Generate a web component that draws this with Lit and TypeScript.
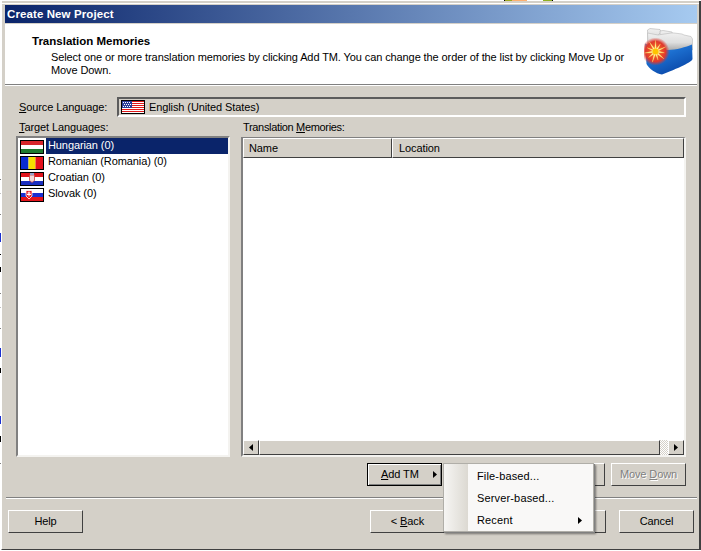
import { LitElement, html, css, svg } from "lit";
import { customElement } from "lit/decorators.js";

const usStripes = [0, 2, 4, 6, 8, 10].map((y) => svg`<rect x="0" y=${y} width="22" height="1" fill="#e01818"/>`);
const flags: Record<string, unknown> = {
  us: svg`<rect width="22" height="12" fill="#fff"/>${usStripes}<rect width="10" height="7" fill="#2a3f9a"/><path d="M1 1.500h1M3 1.500h1M5 1.500h1M7 1.500h1M2 3.500h1M4 3.500h1M6 3.500h1M8 3.500h1M1 5.500h1M3 5.500h1M5 5.500h1M7 5.500h1" stroke="#fff" stroke-width="1"/>`,
  hu: svg`<rect width="22" height="4" fill="#d8262c"/><rect y="4" width="22" height="4" fill="#fff"/><rect y="8" width="22" height="4" fill="#1f7a30"/>`,
  ro: svg`<rect width="7.500" height="12" fill="#0a2ad0"/><rect x="7.500" width="7" height="12" fill="#f6e000"/><rect x="14.500" width="7.500" height="12" fill="#e4101c"/>`,
  hr: svg`<rect width="22" height="4" fill="#e0141c"/><rect y="4" width="22" height="4" fill="#fff"/><rect y="8" width="22" height="4" fill="#1a2fc0"/><path d="M8.500 2h5v5.500l-2.500 2-2.500-2z" fill="#f2d8d8" stroke="#c04040" stroke-width=".8"/><rect x="9" y="0" width="4" height="2" fill="#9aa0c8"/>`,
  sk: svg`<rect width="22" height="4" fill="#fff"/><rect y="4" width="22" height="4" fill="#1a2fd0"/><rect y="8" width="22" height="4" fill="#e4141c"/><path d="M5 1.500h6v5.500l-3 3-3-3z" fill="#e4141c" stroke="#fff" stroke-width=".8"/><path d="M8 2.500v5M6.500 4h3M6 5.500h4" stroke="#fff" stroke-width="1"/>`,
};

function flag(code: string) {
  return html`<svg class="flag" width="24" height="14" viewBox="-1 -1 24 14"><rect x="-.5" y="-.5" width="23" height="13" fill="none" stroke="#000"/>${flags[code]}</svg>`;
}

function arrow(dir: "l" | "r", size = 7) {
  const d = dir === "r" ? "M1 0l4 3.500-4 3.500z" : "M5 0L1 3.500 5 7z";
  return html`<svg width=${size - 1} height=${size} viewBox="0 0 6 7"><path d=${d} fill="#000"/></svg>`;
}

const starPts = Array.from({ length: 22 }, (_, i) => {
  const a = (i * Math.PI) / 11 - Math.PI / 2;
  const r = i % 2 === 0 ? (i % 4 === 0 ? 11 : 9) : 2.8;
  return `${(11.5 + r * Math.cos(a)).toFixed(1)},${(23.5 + r * Math.sin(a)).toFixed(1)}`;
}).join(" ");

const logo = html`<svg class="logo" width="52" height="48" viewBox="0 0 52 48">
  <defs>
    <linearGradient id="fold" x1="0" y1="0" x2=".6" y2="1"><stop offset="0" stop-color="#4f9ce6"/><stop offset=".45" stop-color="#1c6fd0"/><stop offset="1" stop-color="#0a48a8"/></linearGradient>
    <linearGradient id="pap" x1="0" y1="0" x2="0" y2="1"><stop offset="0" stop-color="#f0f0f0"/><stop offset=".5" stop-color="#dedede"/><stop offset="1" stop-color="#a0a0a0"/></linearGradient>
    <radialGradient id="halo"><stop offset="0" stop-color="#ff7a20"/><stop offset=".72" stop-color="#e0382c"/><stop offset="1" stop-color="#e0382c" stop-opacity="0"/></radialGradient>
  </defs>
  <path d="M3.500 2 L6 0.500 L16 1.500 L17 4 L4 18z" fill="url(#pap)" stroke="#b4b4b4" stroke-width=".6"/>
  <path d="M16 3 L19 2.500 L28 4 L29 7 L16 21z" fill="url(#pap)" stroke="#b4b4b4" stroke-width=".6"/>
  <path d="M27 5 L30 5 L38 6 L40 7 L47 8.500 L48.500 11 L48.500 22 L24 24 L4 17 L3.500 5 L14 7z" fill="url(#pap)" stroke="#b8b8b8" stroke-width=".6"/>
  <path d="M1 15.500 C8 18 16 22 24 22 C32 22 42 19 48 16.500 L48.500 31 C48 33.500 40 38 18 46.500 C12 45.500 5 41 2.500 36z" fill="url(#fold)"/>
  <circle cx="11.500" cy="23.500" r="14" fill="url(#halo)"/>
  <polygon points=${starPts} fill="#fff6a0" stroke="#ffe860" stroke-width=".3"/>
  <circle cx="11.500" cy="23.500" r="3" fill="#ffc400"/>
</svg>`;

@customElement("app-root")
export class AppRoot extends LitElement {
  static styles = css`
    :host { display: block; position: relative; width: 701px; height: 551px; background: #fff; overflow: hidden;
      font-family: "Liberation Sans", Arial, sans-serif; font-size: 11px; letter-spacing: -.1px; color: #000; white-space: nowrap; }
    u { text-decoration: underline; }
    .frag { position: absolute; display: block; }
    .window { box-sizing: border-box; position: absolute; left: 1px; top: 1px; width: 700px; height: 549px; background: #d4d0c8;
      border-left: 1px solid #fff; border-right: 2px solid #404040; border-bottom: 1px solid #404040; box-shadow: inset 0 2px 0 #d4d0c8, inset 0 3px 0 #fff;
      display: flex; flex-direction: column; padding: 4px 2px 0 3px; }
    .title { height: 18px; flex: none; background: linear-gradient(90deg, #0a246a, #a6caf0); color: #fff; font-weight: bold; font-size: 11.5px; line-height: 18px; padding-left: 2px; letter-spacing: .1px; margin-bottom: 1px; }
    .head { flex: none; height: 60px; background: #fff; border-bottom: 1px solid #808080; box-shadow: 0 1px 0 #fff; position: relative; }
    .head h1 { margin: 0; padding: 9px 0 0 27px; font-size: 11.5px; font-weight: bold; line-height: 16px; letter-spacing: 0; }
    .head p { margin: 0; padding: 2px 0 0 46px; line-height: 13px; width: 575px; white-space: normal; }
    .logo { position: absolute; right: 1px; top: 4px; }
    .main { flex: none; display: flex; flex-direction: column; padding: 12px 11px 0 11px; }
    .src { display: flex; align-items: center; height: 20px; }
    .src label { width: 101px; padding-left: 3px; box-sizing: border-box; flex: none; }
    .field { flex: 1; height: 20px; box-sizing: border-box; border: 2px solid; border-color: #5c5c5c #fff #fff #5c5c5c; display: flex; align-items: center; gap: 4px; padding-left: 2px; }
    .cols { display: grid; grid-template-columns: 214px 445px; column-gap: 11px; margin-top: 3px; }
    .lab { height: 16px; line-height: 15px; padding-left: 3px; }
    .cols > div:last-child .lab { padding-left: 2px; letter-spacing: -.33px; }
    .list { box-sizing: border-box; height: 321px; background: #fff; border: 2px solid; border-color: #808080 #f4f3f0 #f4f3f0 #808080; padding: 0 0 0 1px; }
    .item { display: flex; align-items: center; height: 16px; gap: 2px; }
    .item .flag { margin-left: 1px; margin-top: 2px; flex: none; }
    .item span { line-height: 14px; padding: 0 0 2px 2px; flex: 1; }
    .item.sel span { background: #0a246a; color: #fff; }
    .table { box-sizing: border-box; height: 320px; margin-top: 1px; background: #fff; border: solid; border-width: 1px 2px 2px 2px; border-color: #808080 #f4f3f0 #f4f3f0 #808080; display: flex; flex-direction: column; }
    .thead { display: flex; height: 20px; flex: none; }
    .th { box-sizing: border-box; background: #d4d0c8; border: 1px solid; border-color: #fff #404040 #404040 #fff; line-height: 18px; padding-left: 5px; }
    .th.a { width: 149px; }
    .th.b { flex: 1; padding-left: 6px; }
    .tbody { flex: 1; }
    .hscroll { flex: none; height: 15px; display: flex; background: #d4d0c8; }
    .sbtn { box-sizing: border-box; width: 16px; height: 15px; flex: none; display: flex; align-items: center; justify-content: center; background: #d4d0c8; border: 1px solid; border-color: #fff #404040 #404040 #fff; }
    .thumb { box-sizing: border-box; flex: 1; border: 1px solid; border-color: #fff #404040 #404040 #fff; }
    .track { width: 8px; flex: none; background: repeating-conic-gradient(#fff 0 25%, #d4d0c8 0 50%) 0 0 / 2px 2px; }
    .btnrow { display: flex; justify-content: flex-end; gap: 6px; margin-top: 6px; }
    .btn { box-sizing: border-box; width: 75px; height: 23px; display: flex; align-items: center; justify-content: center; padding-bottom: 1px; background: #d4d0c8; border: 1px solid; border-color: #fff #404040 #404040 #fff; }
    .btn.focus { border: 1px solid #000; box-shadow: inset 1px 1px 0 #fff, inset -1px -1px 0 #808080; justify-content: space-between; padding: 0 3px 1px 13px; margin-right: 1px; }
    .btn.dis { color: #808080; text-shadow: 1px 1px 0 #fff; }
    .sep { flex: none; height: 1px; background: #808080; box-shadow: 0 1px 0 #fff; margin: 11px 0 0 1px; }
    .foot { flex: none; display: flex; padding: 12px 0 0 3px; }
    .foot .gap { flex: 1; }
    .foot .btn.next { margin-right: 11px; }
    .foot .btn.finish { margin-right: 13px; }
    .foot .btn.cancel { margin-right: 3px; }
    .menu { position: absolute; left: 443px; top: 463px; width: 151px; height: 69px; background: #f9f8f7; box-shadow: 1px 1px 0 #808080, 2px 2px 2px rgba(0,0,0,.45); border: 1px solid #b0aea8; box-sizing: border-box; display: flex; flex-direction: column; padding-top: 1px; }
    .menu::before { content: ""; position: absolute; left: 0; top: 0; bottom: 0; width: 24px; background: linear-gradient(90deg, #f6f5f3, #dcd9d2); }
    .mi { height: 22px; line-height: 22px; flex: none; position: relative; padding-left: 33px; display: flex; align-items: center; letter-spacing: .15px; }
    .mi svg { position: absolute; right: 10px; top: 8px; }
  `;

  render() {
    const frags = [
      [0, 233, 1, 9, "#1a2fd0"], [0, 348, 1, 9, "#1a2fd0"], [0, 416, 1, 8, "#1a2fd0"],
      [0, 179, 1, 1, "#808080"], [0, 193, 1, 1, "#c0c0c0"], [0, 214, 1, 1, "#808080"], [0, 254, 1, 1, "#000"],
      [0, 267, 1, 5, "#000"], [0, 293, 1, 1, "#808080"], [0, 307, 1, 1, "#c0c0c0"], [0, 328, 1, 1, "#808080"],
      [0, 368, 1, 5, "#000"], [0, 436, 1, 6, "#000"], [0, 463, 1, 1, "#808080"],
      [504, 0, 1, 1, "#000"], [505, 0, 7, 1, "#a0a820"], [512, 0, 15, 1, "#ffb070"], [543, 0, 9, 1, "#90b020"], [552, 0, 1, 1, "#000"],
    ];
    return html`
      ${frags.map(([x, y, w, h, c]) => html`<i class="frag" style="left:${x}px;top:${y}px;width:${w}px;height:${h}px;background:${c}"></i>`)}
      <div class="window">
        <div class="title">Create New Project</div>
        <div class="head">
          <h1>Translation Memories</h1>
          <p>Select one or more translation memories by clicking Add TM. You can change the order of the list by clicking Move Up or Move Down.</p>
          ${logo}
        </div>
        <div class="main">
          <div class="src"><label><u>S</u>ource Language:</label><div class="field">${flag("us")}<span>English (United States)</span></div></div>
          <div class="cols">
            <div>
              <div class="lab"><u>T</u>arget Languages:</div>
              <div class="list">
                <div class="item sel">${flag("hu")}<span>Hungarian (0)</span></div>
                <div class="item">${flag("ro")}<span>Romanian (Romania) (0)</span></div>
                <div class="item">${flag("hr")}<span>Croatian (0)</span></div>
                <div class="item">${flag("sk")}<span>Slovak (0)</span></div>
              </div>
            </div>
            <div>
              <div class="lab">Translation <u>M</u>emories:</div>
              <div class="table">
                <div class="thead"><div class="th a">Name</div><div class="th b">Location</div></div>
                <div class="tbody"></div>
                <div class="hscroll">
                  <div class="sbtn">${arrow("l")}</div>
                  <div class="thumb"></div>
                  <div class="track"></div>
                  <div class="sbtn">${arrow("r")}</div>
                </div>
              </div>
            </div>
          </div>
          <div class="btnrow">
            <div class="btn focus"><span><u>A</u>dd TM</span>${arrow("r")}</div>
            <div class="btn"></div>
            <div class="btn"></div>
            <div class="btn dis"><span>Move <u>D</u>own</span></div>
          </div>
        </div>
        <div class="sep"></div>
        <div class="foot">
          <div class="btn"><span>Help</span></div>
          <div class="gap"></div>
          <div class="btn"><span>&lt; <u>B</u>ack</span></div>
          <div class="btn next"></div>
          <div class="btn finish"></div>
          <div class="btn cancel"><span>Cancel</span></div>
        </div>
      </div>
      <div class="menu">
        <div class="mi">File-based...</div>
        <div class="mi">Server-based...</div>
        <div class="mi">Recent${arrow("r")}</div>
      </div>
    `;
  }
}
